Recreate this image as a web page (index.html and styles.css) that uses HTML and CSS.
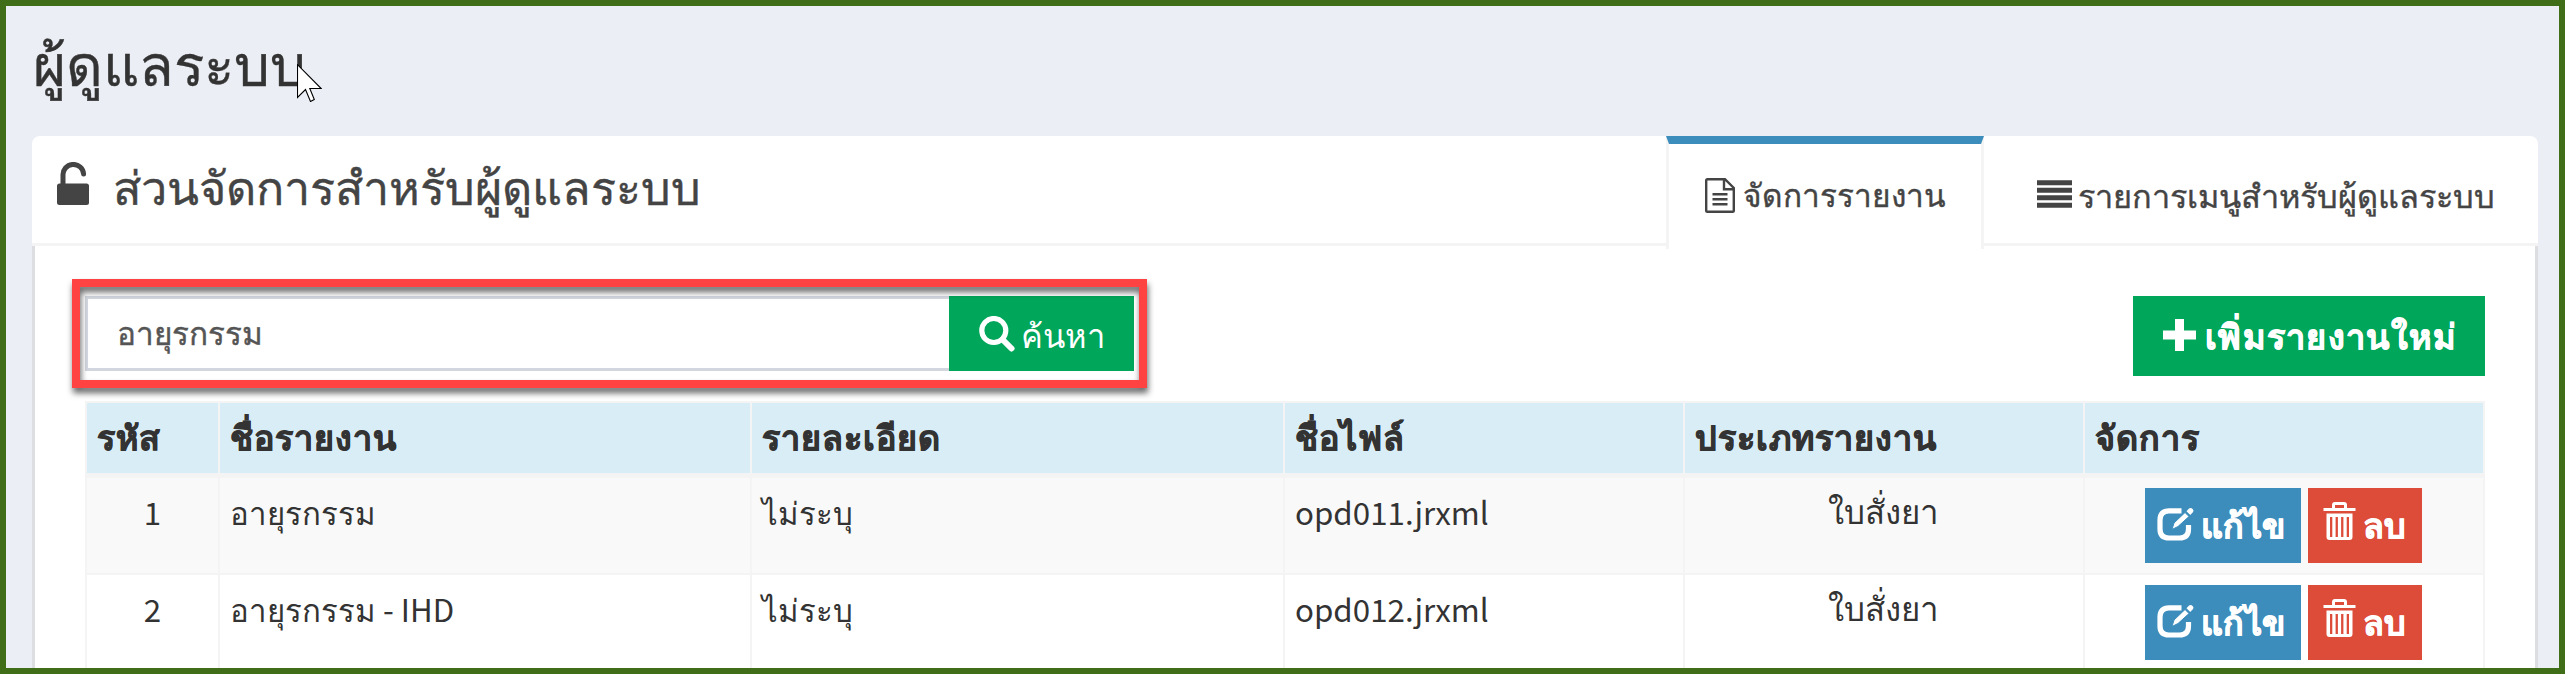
FILE: index.html
```
<!DOCTYPE html>
<html lang="th">
<head>
<meta charset="utf-8">
<title>ผู้ดูแลระบบ</title>
<link rel="stylesheet" href="styles.css">
</head>
<body>
<svg class="defs" aria-hidden="true">
  <symbol id="edit" viewBox="0 0 37 34"><path d="M24.5 3.8H12Q3 3.8 3 13v9q0 9 9 9h10.500q9 0 9-9v-4" fill="none" stroke="currentColor" stroke-width="5.200"/><path d="M15 22.500l2-6.500L28 5.500l4 4L21 19.500z" fill="currentColor" stroke="#3c8dbc" stroke-width="1"/><path d="M29.500 4.200l2.500-2.600q1.800-1.500 3.600.3 1.600 1.800.2 3.400L33.300 8z" fill="currentColor"/></symbol>
  <symbol id="trash" viewBox="0 0 32 38"><path d="M10 8V3q0-1.500 1.500-1.500h9Q22 1.500 22 3v5" fill="none" stroke="currentColor" stroke-width="3"/><path d="M0 6h32v3H0z" fill="currentColor"/><path d="M3 11.500h26V35q0 3-3 3H6q-3 0-3-3zM6.500 15v20h2.300V15zm5.600 0v20h2.300V15zm5.500 0v20h2.300V15zm5.600 0v20h2.300V15z" fill="currentColor" fill-rule="evenodd"/></symbol>
</svg>
<div class="page">
  <h1>ผู้ดูแลระบบ</h1>
  <svg class="cursor" viewBox="0 0 25 38"><path d="M.5.700v32.800l8-8 5 12 3.800-2-4.500-11h11.400z" fill="#fff" stroke="#000" stroke-width="1.100"/></svg>
  <main class="panel">
    <header class="tabs">
      <h2><svg class="lock" viewBox="0 0 32 43"><path d="M6 23V13.500a10.300 10.300 0 0 1 20.600-1.500" fill="none" stroke="currentColor" stroke-width="5" stroke-linecap="round"/><rect y="21.500" width="32" height="21.500" rx="2.500" fill="currentColor"/></svg><span>ส่วนจัดการสำหรับผู้ดูแลระบบ</span></h2>
      <a class="tab active"><svg class="file" viewBox="0 0 30 35"><path d="M1.200 2.500Q1.200 1.200 2.500 1.200H20L28.800 10v22.500q0 1.300-1.300 1.300h-25q-1.300 0-1.300-1.300zM19 1.200v10h9.800M7.500 16.200h15M7.500 21.200h15M7.500 26.200h15" fill="none" stroke="currentColor" stroke-width="2.400"/></svg><span>จัดการรายงาน</span></a>
      <a class="tab"><svg class="list" viewBox="0 0 35 28"><path d="M0 2.800h35M0 10.300h35M0 17.800h35M0 25.300h35" stroke="currentColor" stroke-width="5"/></svg><span>รายการเมนูสำหรับผู้ดูแลระบบ</span></a>
    </header>
    <section class="content">
      <div class="toolbar">
        <div class="search">
          <div class="field">อายุรกรรม</div>
          <button class="find"><svg viewBox="0 0 36 36"><circle cx="14.800" cy="14.500" r="12" fill="none" stroke="currentColor" stroke-width="5.200"/><path d="M23.500 23.500l9 9" stroke="currentColor" stroke-width="6" stroke-linecap="round"/></svg><span>ค้นหา</span></button>
          <div class="highlight"></div>
        </div>
        <button class="add"><svg viewBox="0 0 33 32"><path d="M16.500 0v32M0 16h33" stroke="currentColor" stroke-width="9"/></svg><span>เพิ่มรายงานใหม่</span></button>
      </div>
      <div class="table">
        <div class="row head"><div>รหัส</div><div>ชื่อรายงาน</div><div>รายละเอียด</div><div>ชื่อไฟล์</div><div>ประเภทรายงาน</div><div>จัดการ</div></div>
        <div class="row odd"><div class="num">1</div><div>อายุรกรรม</div><div>ไม่ระบุ</div><div class="latin">opd011.jrxml</div><div class="kind">ใบสั่งยา</div><div class="actions"><button class="edit"><svg><use href="#edit"/></svg><span>แก้ไข</span></button><button class="del"><svg><use href="#trash"/></svg><span>ลบ</span></button></div></div>
        <div class="row"><div class="num">2</div><div>อายุรกรรม - IHD</div><div>ไม่ระบุ</div><div class="latin">opd012.jrxml</div><div class="kind">ใบสั่งยา</div><div class="actions"><button class="edit"><svg><use href="#edit"/></svg><span>แก้ไข</span></button><button class="del"><svg><use href="#trash"/></svg><span>ลบ</span></button></div></div>
      </div>
    </section>
  </main>
</div>
</body>
</html>
```
FILE: styles.css
```
* { box-sizing: border-box; }
body {
  margin: 0;
  font-family: "Noto Sans CJK JP", sans-serif;
  font-size: 32.67px;
  color: #333;
  white-space: nowrap;
}
svg { flex-shrink: 0; }
.defs { position: absolute; width: 0; height: 0; }
.page {
  position: relative;
  width: 2565px;
  height: 674px;
  overflow: hidden;
  border: 6px solid #3f6d18;
  background: #ebeef4;
  padding: 0 21px 0 26px;
}
h1 {
  margin: 0;
  height: 130px;
  padding: 15px 0 0 1px;
  font-size: 56.5px;
  font-weight: 400;
  line-height: 80px;
}
h1, h2, .tab, .field { -webkit-text-stroke: .4px currentColor; }
.cursor { position: absolute; left: 291px; top: 58px; width: 25px; height: 38px; z-index: 2; }
.panel { height: 560px; border-radius: 8px 8px 0 0; background: #fff; }
.tabs {
  display: flex;
  height: 110px;
  border-bottom: 3px solid #f4f4f4;
  color: #444;
}
h2 {
  flex: 1;
  display: flex;
  margin: 0;
  padding-left: 25px;
  font-size: 46.7px;
  font-weight: 400;
  line-height: 97px;
}
.lock { width: 32px; height: 43px; margin: 26px 24px 0 0; }
.tab {
  display: flex;
  height: 113px;
  padding-left: 36px;
  border: solid transparent;
  border-width: 8px 3px 0;
  line-height: 99px;
}
.active { width: 318px; border-color: #3c8dbc #f4f4f4; background: #fff; font-size: 31.6px; }
.file { width: 30px; height: 35px; margin: 34px 8px 0 0; }
.tab:last-child { width: 554px; padding-left: 50px; font-size: 32.5px; }
.list { width: 35px; height: 28px; margin: 36px 6px 0 0; }
.content {
  height: 450px;
  padding: 50px 50px 0;
  border: solid #dcdee1;
  border-width: 0 3px;
}
.toolbar { display: flex; justify-content: space-between; height: 105px; }
.search { position: relative; display: flex; width: 1049px; height: 75px; }
.field {
  flex: 1;
  border: 3px solid #d2d6de;
  border-right: 0;
  padding-left: 29px;
  font-size: 31.5px;
  line-height: 65px;
  color: #555;
}
button {
  display: flex;
  border: 0;
  padding: 0;
  color: #fff;
  font: inherit;
  background: #00a65a;
}
.find { width: 185px; padding-left: 30px; line-height: 76px; font-size: 32.7px; }
.find svg { width: 36px; height: 36px; margin: 20px 6px 0 0; }
.highlight {
  position: absolute;
  left: -13px;
  top: -17px;
  width: 1075px;
  height: 109px;
  border: 8px solid #ff4343;
  filter: drop-shadow(1px 5px 3px rgba(0,0,0,.6));
}
.add { width: 352px; height: 80px; padding-left: 30px; line-height: 76px; font-weight: 700; font-size: 34.2px; letter-spacing: 1.3px; }
.add, .head, .actions { -webkit-text-stroke: .7px currentColor; }
.add svg { width: 33px; height: 32px; margin: 23px 9px 0 0; }
.table { border: 2px solid #f4f4f4; border-bottom: 0; height: 300px; }
.row {
  display: grid;
  grid-template-columns: 133px 532px 533px 400px 400px 1fr;
  height: 97px;
  border-bottom: 2px solid #f4f4f4;
}
.row > div { padding-left: 10px; border-right: 2px solid #f4f4f4; font-size: 31.2px; line-height: 67px; }
.row > div:last-child { border-right: 0; }
.odd { background: #f9f9f9; }
.head { height: 75px; border-bottom-width: 5px; background: #d9edf7; font-weight: 700; letter-spacing: 1px; }
.head > div:nth-child(n) { font-size: 34px; line-height: 66px; }
.row > .num { padding: 0; text-align: center; font-size: 31.3px; }
.row > .kind { padding: 0 2px 0 0; text-align: center; font-size: 33px; line-height: 65px; }
.row > .latin { font-size: 31.3px; }
.row > .actions { display: flex; justify-content: center; gap: 7px; padding: 10px 2px 0 0; }
.actions button { height: 75px; line-height: 72px; font-weight: 700; font-size: 34px; letter-spacing: .6px; }
.edit { width: 156px; padding-left: 12px; background: #3c8dbc; }
.edit svg { width: 37px; height: 34px; margin: 19px 7px 0 0; }
.actions .del { width: 114px; padding-left: 15px; background: #dd4b39; }
.del svg { width: 33px; height: 38px; margin: 14px 7px 0 0; }
```
